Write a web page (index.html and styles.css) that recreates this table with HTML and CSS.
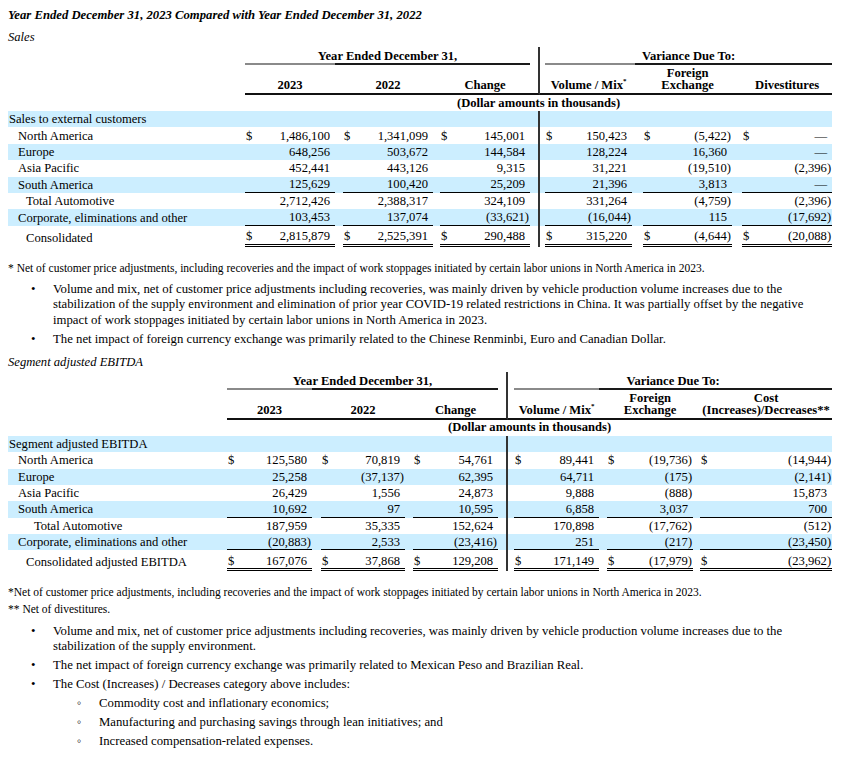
FILE: index.html
```html
<!DOCTYPE html>
<html lang="en">
<head>
<meta charset="utf-8">
<title>Sales and Segment adjusted EBITDA</title>
<link rel="stylesheet" href="styles.css">
</head>
<body>
<p class="title">Year Ended December 31, 2023 Compared with Year Ended December 31, 2022</p>
<p class="caption">Sales</p>
<table class="fin t1">
<colgroup>
<col class="c-label"><col class="c-d"><col class="c-v1"><col class="c-gap1"><col class="c-d"><col class="c-v2"><col class="c-gap2"><col class="c-d"><col class="c-v3"><col class="c-spa"><col class="c-spb"><col class="c-d"><col class="c-v4"><col class="c-gap3"><col class="c-d"><col class="c-v5"><col class="c-gap4"><col class="c-d"><col class="c-v6">
</colgroup>
<tr class="hA">
<td></td><th colspan="8" class="span">Year Ended December 31,</th><td class="spa"></td><td></td><th colspan="8" class="span">Variance Due To:</th>
</tr>
<tr class="hB">
<td class="nob"></td><th colspan="2">2023</th><td></td><th colspan="2">2022</th><td></td><th colspan="2">Change</th><td class="spa"></td><td></td><th colspan="2">Volume / Mix<sup>*</sup></th><td></td><th colspan="2">Foreign<br>Exchange</th><td></td><th colspan="2">Divestitures</th>
</tr>
<tr class="hC"><td></td><th colspan="18">(Dollar amounts in thousands)</th></tr>
<tr class="bl"><td class="lb">Sales to external customers</td><td class="d"></td><td class="v"></td><td></td><td class="d"></td><td class="v"></td><td></td><td class="d"></td><td class="v"></td><td class="spa"></td><td></td><td class="d"></td><td class="v"></td><td></td><td class="d"></td><td class="v"></td><td></td><td class="d"></td><td class="v"></td></tr>
<tr><td class="lb i1">North America</td><td class="d">$</td><td class="v">1,486,100</td><td></td><td class="d">$</td><td class="v">1,341,099</td><td></td><td class="d">$</td><td class="v">145,001</td><td class="spa"></td><td></td><td class="d">$</td><td class="v">150,423</td><td></td><td class="d">$</td><td class="v n">(5,422)</td><td></td><td class="d">$</td><td class="v">—</td></tr>
<tr class="bl"><td class="lb i1">Europe</td><td class="d"></td><td class="v">648,256</td><td></td><td class="d"></td><td class="v">503,672</td><td></td><td class="d"></td><td class="v">144,584</td><td class="spa"></td><td></td><td class="d"></td><td class="v">128,224</td><td></td><td class="d"></td><td class="v">16,360</td><td></td><td class="d"></td><td class="v">—</td></tr>
<tr><td class="lb i1">Asia Pacific</td><td class="d"></td><td class="v">452,441</td><td></td><td class="d"></td><td class="v">443,126</td><td></td><td class="d"></td><td class="v">9,315</td><td class="spa"></td><td></td><td class="d"></td><td class="v">31,221</td><td></td><td class="d"></td><td class="v n">(19,510)</td><td></td><td class="d"></td><td class="v n">(2,396)</td></tr>
<tr class="bl ul"><td class="lb i1">South America</td><td class="d"></td><td class="v">125,629</td><td></td><td class="d"></td><td class="v">100,420</td><td></td><td class="d"></td><td class="v">25,209</td><td class="spa"></td><td></td><td class="d"></td><td class="v">21,396</td><td></td><td class="d"></td><td class="v">3,813</td><td></td><td class="d"></td><td class="v">—</td></tr>
<tr><td class="lb i2">Total Automotive</td><td class="d"></td><td class="v">2,712,426</td><td></td><td class="d"></td><td class="v">2,388,317</td><td></td><td class="d"></td><td class="v">324,109</td><td class="spa"></td><td></td><td class="d"></td><td class="v">331,264</td><td></td><td class="d"></td><td class="v n">(4,759)</td><td></td><td class="d"></td><td class="v n">(2,396)</td></tr>
<tr class="bl ul"><td class="lb i1">Corporate, eliminations and other</td><td class="d"></td><td class="v">103,453</td><td></td><td class="d"></td><td class="v">137,074</td><td></td><td class="d"></td><td class="v n">(33,621)</td><td class="spa"></td><td></td><td class="d"></td><td class="v n">(16,044)</td><td></td><td class="d"></td><td class="v">115</td><td></td><td class="d"></td><td class="v n">(17,692)</td></tr>
<tr class="tot"><td class="lb i2">Consolidated</td><td class="d">$</td><td class="v">2,815,879</td><td></td><td class="d">$</td><td class="v">2,525,391</td><td></td><td class="d">$</td><td class="v">290,488</td><td class="spa"></td><td></td><td class="d">$</td><td class="v">315,220</td><td></td><td class="d">$</td><td class="v n">(4,644)</td><td></td><td class="d">$</td><td class="v n">(20,088)</td></tr>
</table>
<p class="note note1">* Net of customer price adjustments, including recoveries and the impact of work stoppages initiated by certain labor unions in North America in 2023.</p>
<ul class="bullets b1">
<li>Volume and mix, net of customer price adjustments including recoveries, was mainly driven by vehicle production volume increases due to the stabilization of the supply environment and elimination of prior year COVID-19 related restrictions in China. It was partially offset by the negative impact of work stoppages initiated by certain labor unions in North America in 2023.</li>
<li>The net impact of foreign currency exchange was primarily related to the Chinese Renminbi, Euro and Canadian Dollar.</li>
</ul>
<p class="caption caption2">Segment adjusted EBITDA</p>
<table class="fin t2">
<colgroup>
<col class="c-label"><col class="c-d"><col class="c-v1"><col class="c-gap1"><col class="c-d"><col class="c-v2"><col class="c-gap2"><col class="c-d"><col class="c-v3"><col class="c-spa"><col class="c-spb"><col class="c-d"><col class="c-v4"><col class="c-gap3"><col class="c-d"><col class="c-v5"><col class="c-gap4"><col class="c-d"><col class="c-v6">
</colgroup>
<tr class="hA">
<td></td><th colspan="8" class="span">Year Ended December 31,</th><td class="spa"></td><td></td><th colspan="8" class="span">Variance Due To:</th>
</tr>
<tr class="hB">
<td class="nob"></td><th colspan="2">2023</th><td></td><th colspan="2">2022</th><td></td><th colspan="2">Change</th><td class="spa"></td><td></td><th colspan="2">Volume / Mix<sup>*</sup></th><td></td><th colspan="2">Foreign<br>Exchange</th><td></td><th colspan="2">Cost<br>(Increases)/Decreases**</th>
</tr>
<tr class="hC"><td></td><th colspan="18">(Dollar amounts in thousands)</th></tr>
<tr class="bl"><td class="lb">Segment adjusted EBITDA</td><td class="d"></td><td class="v"></td><td></td><td class="d"></td><td class="v"></td><td></td><td class="d"></td><td class="v"></td><td class="spa"></td><td></td><td class="d"></td><td class="v"></td><td></td><td class="d"></td><td class="v"></td><td></td><td class="d"></td><td class="v"></td></tr>
<tr><td class="lb i1">North America</td><td class="d">$</td><td class="v">125,580</td><td></td><td class="d">$</td><td class="v">70,819</td><td></td><td class="d">$</td><td class="v">54,761</td><td class="spa"></td><td></td><td class="d">$</td><td class="v">89,441</td><td></td><td class="d">$</td><td class="v n">(19,736)</td><td></td><td class="d">$</td><td class="v n">(14,944)</td></tr>
<tr class="bl"><td class="lb i1">Europe</td><td class="d"></td><td class="v">25,258</td><td></td><td class="d"></td><td class="v n">(37,137)</td><td></td><td class="d"></td><td class="v">62,395</td><td class="spa"></td><td></td><td class="d"></td><td class="v">64,711</td><td></td><td class="d"></td><td class="v n">(175)</td><td></td><td class="d"></td><td class="v n">(2,141)</td></tr>
<tr><td class="lb i1">Asia Pacific</td><td class="d"></td><td class="v">26,429</td><td></td><td class="d"></td><td class="v">1,556</td><td></td><td class="d"></td><td class="v">24,873</td><td class="spa"></td><td></td><td class="d"></td><td class="v">9,888</td><td></td><td class="d"></td><td class="v n">(888)</td><td></td><td class="d"></td><td class="v">15,873</td></tr>
<tr class="bl ul"><td class="lb i1">South America</td><td class="d"></td><td class="v">10,692</td><td></td><td class="d"></td><td class="v">97</td><td></td><td class="d"></td><td class="v">10,595</td><td class="spa"></td><td></td><td class="d"></td><td class="v">6,858</td><td></td><td class="d"></td><td class="v">3,037</td><td></td><td class="d"></td><td class="v">700</td></tr>
<tr><td class="lb i3">Total Automotive</td><td class="d"></td><td class="v">187,959</td><td></td><td class="d"></td><td class="v">35,335</td><td></td><td class="d"></td><td class="v">152,624</td><td class="spa"></td><td></td><td class="d"></td><td class="v">170,898</td><td></td><td class="d"></td><td class="v n">(17,762)</td><td></td><td class="d"></td><td class="v n">(512)</td></tr>
<tr class="bl ul"><td class="lb i1">Corporate, eliminations and other</td><td class="d"></td><td class="v n">(20,883)</td><td></td><td class="d"></td><td class="v">2,533</td><td></td><td class="d"></td><td class="v n">(23,416)</td><td class="spa"></td><td></td><td class="d"></td><td class="v">251</td><td></td><td class="d"></td><td class="v n">(217)</td><td></td><td class="d"></td><td class="v n">(23,450)</td></tr>
<tr class="tot"><td class="lb i2">Consolidated adjusted EBITDA</td><td class="d">$</td><td class="v">167,076</td><td></td><td class="d">$</td><td class="v">37,868</td><td></td><td class="d">$</td><td class="v">129,208</td><td class="spa"></td><td></td><td class="d">$</td><td class="v">171,149</td><td></td><td class="d">$</td><td class="v n">(17,979)</td><td></td><td class="d">$</td><td class="v n">(23,962)</td></tr>
</table>
<p class="note note2">*Net of customer price adjustments, including recoveries and the impact of work stoppages initiated by certain labor unions in North America in 2023.</p>
<p class="note note3">** Net of divestitures.</p>
<ul class="bullets b2">
<li>Volume and mix, net of customer price adjustments including recoveries, was mainly driven by vehicle production volume increases due to the stabilization of the supply environment.</li>
<li>The net impact of foreign currency exchange was primarily related to Mexican Peso and Brazilian Real.</li>
<li>The Cost (Increases) / Decreases category above includes:
<ul class="sub">
<li>Commodity cost and inflationary economics;</li>
<li>Manufacturing and purchasing savings through lean initiatives; and</li>
<li>Increased compensation-related expenses.</li>
</ul>
</li>
</ul>
</body>
</html>
```

FILE: styles.css
```css
* { box-sizing: border-box; }
html, body { margin: 0; padding: 0; background: #fff; }
body {
  font-family: "Liberation Serif", "Times New Roman", serif;
  color: #000;
  padding: 0 8px;
}
.title {
  margin: 7px 0 0;
  font-size: 12.7px;
  line-height: 16px;
  font-weight: bold;
  font-style: italic;
}
.caption {
  margin: 6px 0 2px;
  font-size: 12.6px;
  line-height: 16px;
  font-style: italic;
}
.caption2 { margin: 6px 0 2px; }

/* tables */
.fin {
  border-collapse: separate;
  border-spacing: 0;
  table-layout: fixed;
  width: 824px;
  font-size: 12.6px;
}
.fin td, .fin th {
  padding: 0;
  line-height: 14px;
  white-space: nowrap;
  height: 16.4px;
  vertical-align: middle;
}
.fin th { font-weight: bold; text-align: center; }
.fin sup { font-size: 7px; vertical-align: 6px; line-height: 0; }

.fin .hA td, .fin .hA th { height: 18px; vertical-align: bottom; }
.fin .hA th.span { border-bottom: 2px solid #222; }
.t1 .hA th.span { border-image: linear-gradient(to right, #8a8a8a 90px, #1a1a1a 90px) 1; }
.t2 .hA th.span { border-image: linear-gradient(to right, #8a8a8a 85px, #1a1a1a 85px) 1; }
.fin .hB td, .fin .hB th { height: 30px; border-bottom: 2px solid #111; vertical-align: bottom; line-height: 12px; padding-bottom: 2px; }
.fin .hB td.nob { border-bottom: 0; }
.fin .hC td, .fin .hC th { height: 16px; padding-bottom: 1px; }

.fin .spa { border-right: 2px solid #333; }
.bl td { background: #cceeff; }
.fin .lb { padding-left: 1px; text-align: left; overflow: visible; }
.fin .i1 { padding-left: 10px; }
.fin .i2 { padding-left: 18px; }
.fin .i3 { padding-left: 26px; }
.fin .d { text-align: left; padding-left: 1px; }
.fin .v { text-align: right; padding-right: 5px; }
.fin .v.n { padding-right: 1px; }
.fin .ul .d, .fin .ul .v { border-bottom: 1px solid #000; }
.fin .tot td { height: 21px; padding-top: 3px; }
.fin .tot .d, .fin .tot .v { border-bottom: 3px double #000; }

/* table 1 columns */
.t1 .c-label { width: 237px; }
.t1 .c-d { width: 14px; }
.t1 .c-v1, .t1 .c-v2, .t1 .c-v3, .t1 .c-v6 { width: 76px; }
.t1 .c-v4 { width: 73px; }
.t1 .c-v5 { width: 75px; }
.t1 .c-gap1 { width: 8px; }
.t1 .c-gap2 { width: 7px; }
.t1 .c-spa { width: 10px; }
.t1 .c-spb { width: 5px; }
.t1 .c-gap3 { width: 11px; }
.t1 .c-gap4 { width: 10px; }

/* table 2 columns */
.t2 .c-label { width: 219px; }
.t2 .c-d { width: 14px; }
.t2 .c-v1 { width: 71px; }
.t2 .c-v2 { width: 70px; }
.t2 .c-v3 { width: 71px; }
.t2 .c-v4 { width: 71px; }
.t2 .c-v5 { width: 72px; }
.t2 .c-v6 { width: 118px; }
.t2 .c-gap1 { width: 9px; }
.t2 .c-gap2 { width: 8px; }
.t2 .c-spa { width: 10px; }
.t2 .c-spb { width: 6px; }
.t2 .c-gap3 { width: 8px; }
.t2 .c-gap4 { width: 7px; }

/* notes and bullets */
.note {
  margin: 0;
  font-size: 11.5px;
  line-height: 14px;
}
.note1 { margin-top: 14px; }
.note2 { margin-top: 14px; }
.note3 { margin-top: 3px; }
.bullets {
  list-style: none;
  margin: 0;
  padding: 0;
  font-size: 12.75px;
  line-height: 15.5px;
}
.bullets > li {
  padding-left: 45px;
  text-indent: -22px;
  margin-top: 3.5px;
}
.bullets li::before {
  content: "\2022";
  display: inline-block;
  width: 22px;
  text-indent: 0;
}
.b1 { margin-top: 7.25px; margin-bottom: 6.25px; }
.b2 { margin-top: 7.25px; }
.bullets > li:first-child { margin-top: 0; }
.sub { list-style: none; margin: 0; padding: 0; }
.sub > li {
  padding-left: 46px;
  margin-top: 3.5px;
}
.sub li::before { content: "\25E6"; }
```
